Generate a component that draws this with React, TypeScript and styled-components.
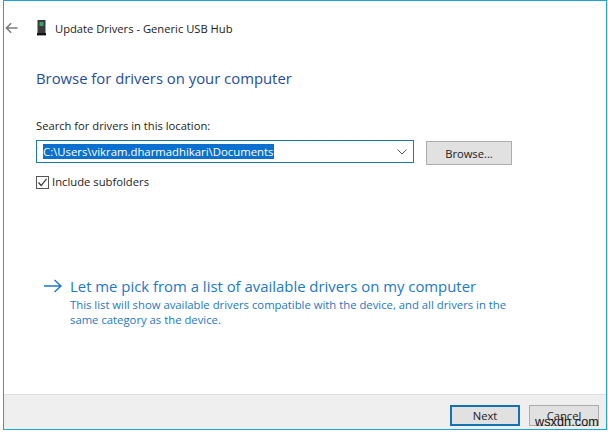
import React from "react";
import styled, { createGlobalStyle } from "styled-components";

const Global = createGlobalStyle`
  html, body { margin: 0; padding: 0; background: #fff; }
  body { font-family: "Open Sans", "Noto Sans", "Liberation Sans", sans-serif; width: 608px; height: 433px; overflow: hidden; }
`;

const Page = styled.div`
  width: 608px;
  height: 433px;
  padding: 0 1px 3px 3px;
  box-sizing: border-box;
  position: relative;
  background: #fff;
`;

const Frame = styled.div`
  height: 100%;
  box-sizing: border-box;
  border: 1px solid #1ba3da;
  display: flex;
  flex-direction: column;
`;

const Main = styled.div`
  flex: 1;
  display: flex;
  flex-direction: column;
  min-height: 0;
`;

const TitleBar = styled.div`
  display: flex;
  align-items: center;
  height: 20px;
  margin-top: 17px;
  padding-left: 1px;
`;

const BackButton = styled.div`
  width: 32px;
  display: flex;
  align-items: center;
`;

const DeviceSlot = styled.div`
  width: 18px;
  display: flex;
  align-items: center;
`;

const TitleText = styled.span`
  font-size: 11.2px;
  color: #1a1a1a;
`;

const Content = styled.div`
  padding: 0 0 0 32px;
  display: flex;
  flex-direction: column;
`;

const Heading = styled.h1`
  margin: 29px 0 0;
  font-size: 14.85px;
  line-height: 22px;
  font-weight: 400;
  color: #1f4e9c;
`;

const FieldLabel = styled.label`
  margin-top: 29px;
  font-size: 11.2px;
  line-height: 16px;
  color: #1c1c1c;
`;

const FieldRow = styled.div`
  display: flex;
  align-items: flex-start;
  margin-top: 6px;
`;

const Combo = styled.div`
  width: 378px;
  height: 23px;
  box-sizing: border-box;
  border: 1px solid #1a78b4;
  display: flex;
  align-items: center;
  padding: 0 6px;
  justify-content: space-between;
`;

const Selected = styled.span`
  background: #0a70d0;
  color: #fff;
  font-size: 11.35px;
  line-height: 15px;
  white-space: nowrap;
`;

const GreyButton = styled.button<{ $focused?: boolean }>`
  width: 70px;
  height: 21px;
  box-sizing: border-box;
  border: ${(p) => (p.$focused ? "2px solid #1572b0" : "1px solid #adadad")};
  background: #e1e1e1;
  color: #1a1a1a;
  font-family: inherit;
  font-size: 11.2px;
  padding: 0;
`;

const BrowseButton = styled(GreyButton)`
  width: 86px;
  height: 24px;
  margin-left: 12px;
  margin-top: 1px;
`;

const CheckRow = styled.div`
  display: flex;
  align-items: center;
  gap: 3px;
  margin-top: 9px;
  font-size: 11.25px;
  color: #1c1c1c;
  line-height: 16px;
`;

const CheckBox = styled.span`
  width: 13px;
  height: 13px;
  box-sizing: border-box;
  border: 1px solid #555;
  display: flex;
  align-items: center;
  justify-content: center;
`;

const LinkBlock = styled.div`
  display: grid;
  grid-template-columns: 26px auto;
  margin: 85px 0 0 8px;
  color: #1c78c8;
`;

const ArrowSlot = styled.div`
  display: flex;
  align-items: center;
  height: 22px;
`;

const LinkTitle = styled.div`
  font-size: 14.9px;
  line-height: 22px;
  white-space: nowrap;
`;

const LinkDesc = styled.div`
  grid-column: 2;
  font-size: 11.3px;
  line-height: 15px;
  width: 450px;
`;

const Footer = styled.div`
  height: 35px;
  box-sizing: border-box;
  border-top: 1px solid #dfdfdf;
  background: #efefef;
  display: flex;
  justify-content: flex-end;
  align-items: flex-start;
  gap: 9px;
  padding: 10px 7px 0 0;
`;

const Watermark = styled.span`
  position: absolute;
  left: 535px;
  top: 413px;
  font-family: "Liberation Sans", sans-serif;
  font-size: 12.6px;
  line-height: 18px;
  color: #111;
  letter-spacing: 0.1px;
`;

export default function App() {
  return (
    <Page>
      <Global />
      <Frame>
        <Main>
          <TitleBar>
            <BackButton>
              <svg width="13" height="12" viewBox="0 0 13 12" fill="none" stroke="#7d7d7d" strokeWidth="1.6">
                <path d="M12.5 6H1.500M6.200 1.200 1.400 6l4.800 4.800" />
              </svg>
            </BackButton>
            <DeviceSlot>
              <svg width="9" height="16" viewBox="0 0 9 16">
                <rect x="0.5" y="0" width="8" height="13" fill="#3a3a3a" />
                <rect x="2.5" y="2" width="4" height="4" fill="#35a868" />
                <rect x="0" y="13" width="9" height="2.4" fill="#111" />
              </svg>
            </DeviceSlot>
            <TitleText>Update Drivers - Generic USB Hub</TitleText>
          </TitleBar>
          <Content>
            <Heading>Browse for drivers on your computer</Heading>
            <FieldLabel>Search for drivers in this location:</FieldLabel>
            <FieldRow>
              <Combo>
                <Selected>C:\Users\vikram.dharmadhikari\Documents</Selected>
                <svg width="10" height="6" viewBox="0 0 10 6" fill="none" stroke="#555" strokeWidth="1">
                  <path d="M0.5 0.5 5 5l4.500-4.500" />
                </svg>
              </Combo>
              <BrowseButton>Browse...</BrowseButton>
            </FieldRow>
            <CheckRow>
              <CheckBox>
                <svg width="11" height="11" viewBox="0 0 11 11" fill="none" stroke="#333" strokeWidth="1.2">
                  <path d="M1.500 5.500 4.200 8.500 9.500 1.800" />
                </svg>
              </CheckBox>
              Include subfolders
            </CheckRow>
            <LinkBlock>
              <ArrowSlot>
                <svg width="18" height="14" viewBox="0 0 18 14" fill="none" stroke="#1c78c8" strokeWidth="1.4">
                  <path d="M0 7h17M10.500 1 17 7l-6.500 6" />
                </svg>
              </ArrowSlot>
              <LinkTitle>Let me pick from a list of available drivers on my computer</LinkTitle>
              <LinkDesc>
                This list will show available drivers compatible with the device, and all drivers in the same category as the device.
              </LinkDesc>
            </LinkBlock>
          </Content>
        </Main>
        <Footer>
          <GreyButton $focused>Next</GreyButton>
          <GreyButton>Cancel</GreyButton>
        </Footer>
      </Frame>
      <Watermark>wsxdn.com</Watermark>
    </Page>
  );
}
